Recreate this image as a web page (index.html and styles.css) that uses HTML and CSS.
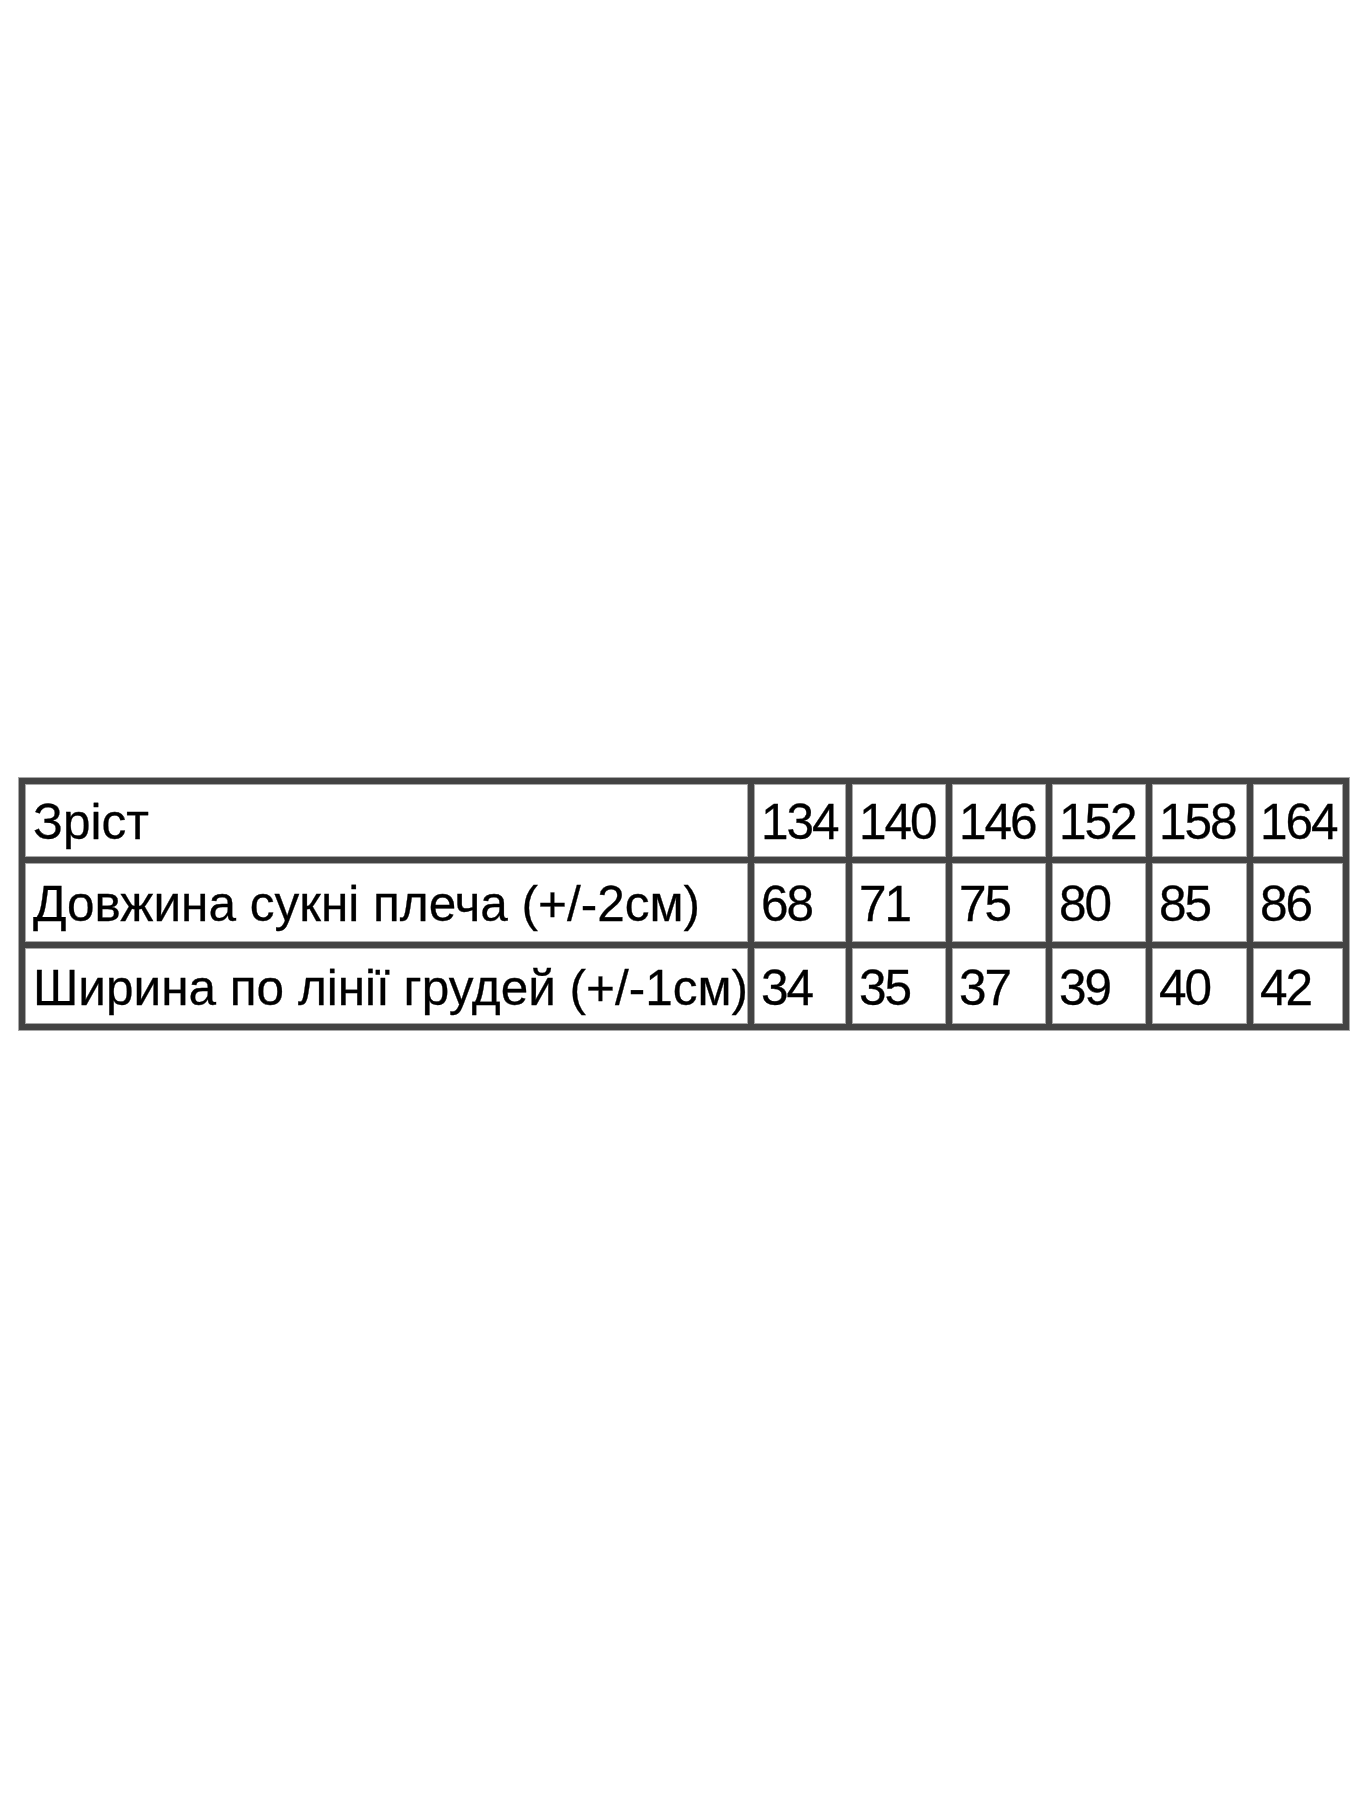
FILE: index.html
```html
<!DOCTYPE html>
<html lang="uk">
<head>
<meta charset="utf-8">
<title>Розмірна сітка</title>
<link rel="stylesheet" href="styles.css">
</head>
<body>
<div class="page">
  <table class="sizes">
    <colgroup>
      <col class="c-label">
      <col class="c-1">
      <col class="c-2">
      <col class="c-3">
      <col class="c-4">
      <col class="c-5">
      <col class="c-6">
    </colgroup>
    <tr class="r1">
      <td class="label">Зріст</td>
      <td class="num">134</td>
      <td class="num">140</td>
      <td class="num">146</td>
      <td class="num">152</td>
      <td class="num">158</td>
      <td class="num">164</td>
    </tr>
    <tr class="r2">
      <td class="label">Довжина сукні плеча (+/-2см)</td>
      <td class="num">68</td>
      <td class="num">71</td>
      <td class="num">75</td>
      <td class="num">80</td>
      <td class="num">85</td>
      <td class="num">86</td>
    </tr>
    <tr class="r3">
      <td class="label">Ширина по лінії грудей (+/-1см)</td>
      <td class="num">34</td>
      <td class="num">35</td>
      <td class="num">37</td>
      <td class="num">39</td>
      <td class="num">40</td>
      <td class="num">42</td>
    </tr>
  </table>
</div>
</body>
</html>
```

FILE: styles.css
```css
html, body {
  margin: 0;
  padding: 0;
  background: #ffffff;
}

.page {
  width: 1350px;
  height: 1800px;
  box-sizing: border-box;
  padding: 778px 0 0 19px;
}

.sizes {
  table-layout: fixed;
  border-collapse: separate;
  border-spacing: 0;
  width: 1330px;
  border: 3px solid #434343;
  box-shadow: 0 0 0 1px #a8a8a8;
  font-family: "Liberation Sans", Arial, sans-serif;
  font-size: 49.5px;
  color: #000000;
  -webkit-text-stroke: 0.3px #000000;
}

.c-label { width: 729px; }
.c-1 { width: 98px; }
.c-2 { width: 100px; }
.c-3 { width: 100px; }
.c-4 { width: 100px; }
.c-5 { width: 101px; }
.c-6 { width: 96px; }

.sizes td {
  box-sizing: border-box;
  border: 3px solid #434343;
  box-shadow: inset 0 0 0 1px #a8a8a8;
  padding: 3px 0 0 8px;
  white-space: nowrap;
  overflow: visible;
  vertical-align: middle;
  line-height: 1;
}

.sizes td.num {
  padding-left: 7px;
  letter-spacing: -2px;
}

.r1 td { height: 79px; }
.r2 td { height: 85px; }
.r3 td { height: 82px; }
```
